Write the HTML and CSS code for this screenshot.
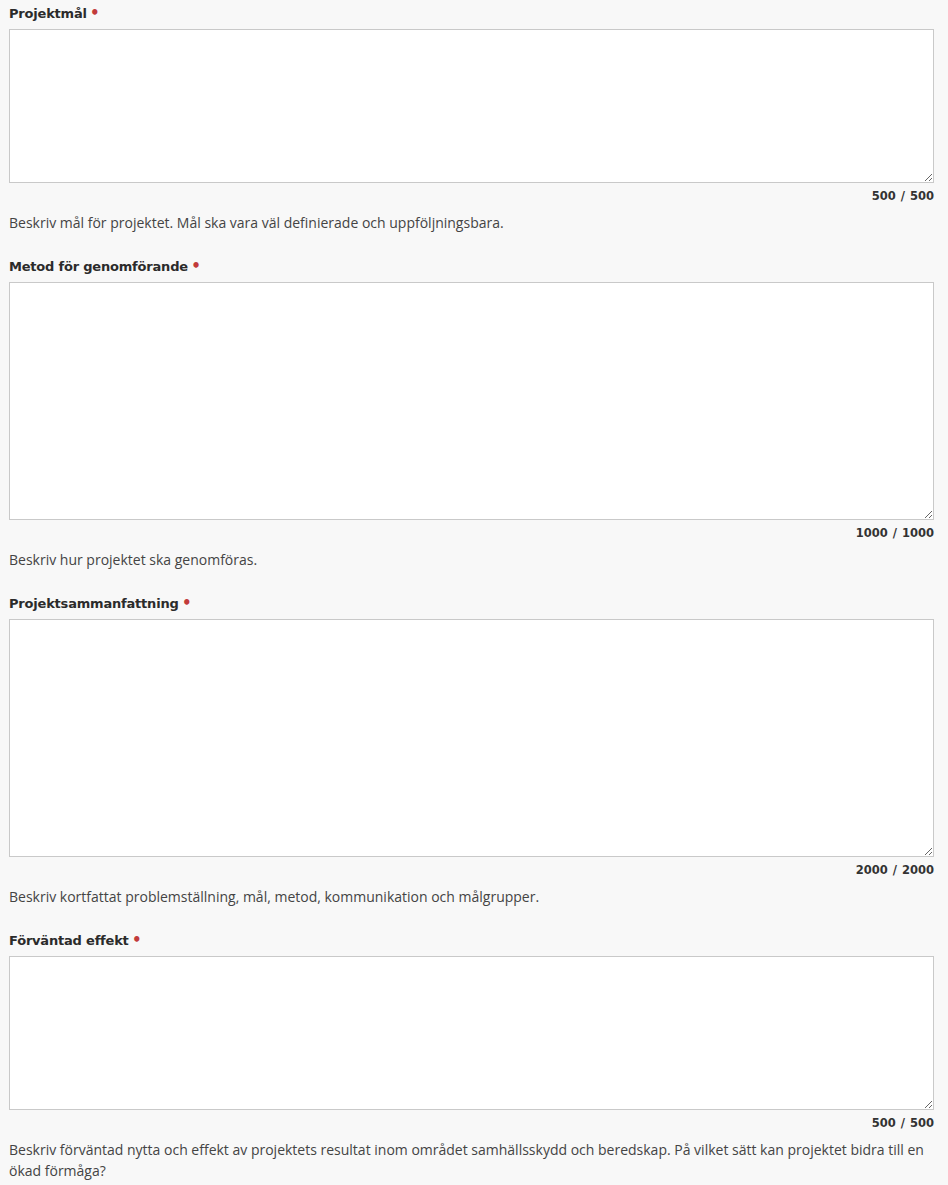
FILE: index.html
```html
<!DOCTYPE html>
<html lang="sv">
<head>
<meta charset="utf-8">
<link rel="stylesheet" href="styles.css">
</head>
<body>
<form class="form">
  <div class="field">
    <label class="label">Projektmål <span class="req">•</span></label>
    <textarea class="input h-sm"></textarea>
    <div class="counter">500 <span class="sep">/</span> 500</div>
    <p class="help">Beskriv mål för projektet. Mål ska vara väl definierade och uppföljningsbara.</p>
  </div>
  <div class="field">
    <label class="label">Metod för genomförande <span class="req">•</span></label>
    <textarea class="input h-lg"></textarea>
    <div class="counter">1000 <span class="sep">/</span> 1000</div>
    <p class="help">Beskriv hur projektet ska genomföras.</p>
  </div>
  <div class="field">
    <label class="label">Projektsammanfattning <span class="req">•</span></label>
    <textarea class="input h-lg"></textarea>
    <div class="counter">2000 <span class="sep">/</span> 2000</div>
    <p class="help">Beskriv kortfattat problemställning, mål, metod, kommunikation och målgrupper.</p>
  </div>
  <div class="field">
    <label class="label">Förväntad effekt <span class="req">•</span></label>
    <textarea class="input h-sm"></textarea>
    <div class="counter">500 <span class="sep">/</span> 500</div>
    <p class="help">Beskriv förväntad nytta och effekt av projektets resultat inom området samhällsskydd och beredskap. På vilket sätt kan projektet bidra till en ökad förmåga?</p>
  </div>
</form>
</body>
</html>
```

FILE: styles.css
```css
html, body {
  margin: 0;
  padding: 0;
  background: #f8f8f8;
}
.form {
  padding: 4px 14px 0 9px;
  display: flex;
  flex-direction: column;
  gap: 24px;
}
.field {
  display: flex;
  flex-direction: column;
}
.label {
  display: block;
  height: 20px;
  font-family: "DejaVu Sans", Inter, sans-serif;
  font-weight: 700;
  font-size: 13px;
  line-height: 20px;
  color: #2b2b2b;
  margin-bottom: 5px;
  letter-spacing: -0.2px;
}
.req {
  color: #c23b3b;
  font-size: 15px;
  line-height: 0;
  margin-left: -1px;
}
.input {
  display: block;
  box-sizing: border-box;
  width: 100%;
  margin: 0;
  border: 1px solid #c9c9c9;
  background: #fff;
  border-radius: 0;
  padding: 6px;
  resize: vertical;
}
.h-sm { height: 154px; }
.h-lg { height: 238px; }
.counter {
  margin-top: 4px;
  text-align: right;
  font-family: "DejaVu Sans", Inter, sans-serif;
  font-weight: 700;
  font-size: 11.5px;
  line-height: 18px;
  color: #333;
}
.sep {
  margin: 0 1px;
}
.help {
  margin: 7px 0 0;
  font-family: "Open Sans", sans-serif;
  font-size: 14px;
  line-height: 21px;
  color: #444;
}
```
